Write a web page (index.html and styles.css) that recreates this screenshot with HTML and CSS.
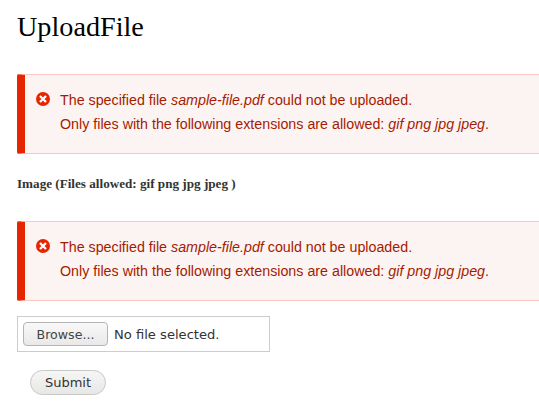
FILE: index.html
```html
<!DOCTYPE html>
<html lang="en">
<head>
<meta charset="utf-8">
<title>UploadFile</title>
<link rel="stylesheet" href="styles.css">
</head>
<body>
<main class="page">
  <h1 class="title">UploadFile</h1>
  <div class="message first">
    <svg class="icon" viewBox="0 0 14 14" aria-hidden="true"><circle cx="7" cy="7" r="7" fill="#e62600"/><path d="M4 4l6 6M10 4l-6 6" stroke="#fff" stroke-width="2.3" fill="none"/></svg>
    <div>The specified file <em>sample-file.pdf</em> could not be uploaded.<br>Only files with the following extensions are allowed: <em>gif png jpg jpeg</em>.</div>
  </div>
  <label class="label">Image (Files allowed: gif png jpg jpeg )</label>
  <div class="message second">
    <svg class="icon" viewBox="0 0 14 14" aria-hidden="true"><circle cx="7" cy="7" r="7" fill="#e62600"/><path d="M4 4l6 6M10 4l-6 6" stroke="#fff" stroke-width="2.3" fill="none"/></svg>
    <div>The specified file <em>sample-file.pdf</em> could not be uploaded.<br>Only files with the following extensions are allowed: <em>gif png jpg jpeg</em>.</div>
  </div>
  <div class="file-box"><span class="browse">Browse...</span><span class="no-file">No file selected.</span></div>
  <button class="submit" type="button">Submit</button>
</main>
</body>
</html>
```
FILE: styles.css
```css
html, body { margin: 0; padding: 0; background: #fff; }
body { width: 539px; height: 416px; overflow: hidden; }
.page { padding: 0 0 0 17px; width: 540px; box-sizing: border-box; }
.title { margin: 0; padding-top: 12px; height: 74px; box-sizing: border-box; font: 400 28.2px/30px "Liberation Serif", serif; color: #000; }
.message { display: flex; align-items: flex-start; box-sizing: border-box; width: 530px; height: 80px; padding: 13px 0 0 11px; background: #fcf4f2; border: 1px solid #f9c9bf; border-left: 8px solid #e62600; border-radius: 2px; color: #a51b00; font: 14.27px/24px "Liberation Sans", sans-serif; }
.icon { width: 14px; height: 14px; margin: 4px 10px 0 0; flex: none; }
.label { display: block; margin: 23px 0 30px; font: 700 13.15px/14px "Liberation Serif", serif; color: #333; }
.second { margin-bottom: 15px; }
.file-box { display: flex; align-items: center; box-sizing: border-box; width: 253px; height: 36px; padding-left: 5px; border: 1px solid #ccc; font: 13.1px "DejaVu Sans", sans-serif; color: #333; }
.browse { box-sizing: border-box; width: 85px; height: 24px; line-height: 23px; text-align: center; border: 1px solid #b4b4b4; border-radius: 4px; background: linear-gradient(#f8f8f8, #e9e9e9); color: #444; font-size: 12.6px; }
.no-file { margin-left: 6px; }
.submit { display: block; box-sizing: border-box; width: 76px; height: 25px; margin: 18px 0 0 13px; padding: 0; border: 1px solid #c8c8c8; border-radius: 13px; background: linear-gradient(#f6f6f3, #e7e7e7); color: #333; font: 13px "DejaVu Sans", sans-serif; }
```
